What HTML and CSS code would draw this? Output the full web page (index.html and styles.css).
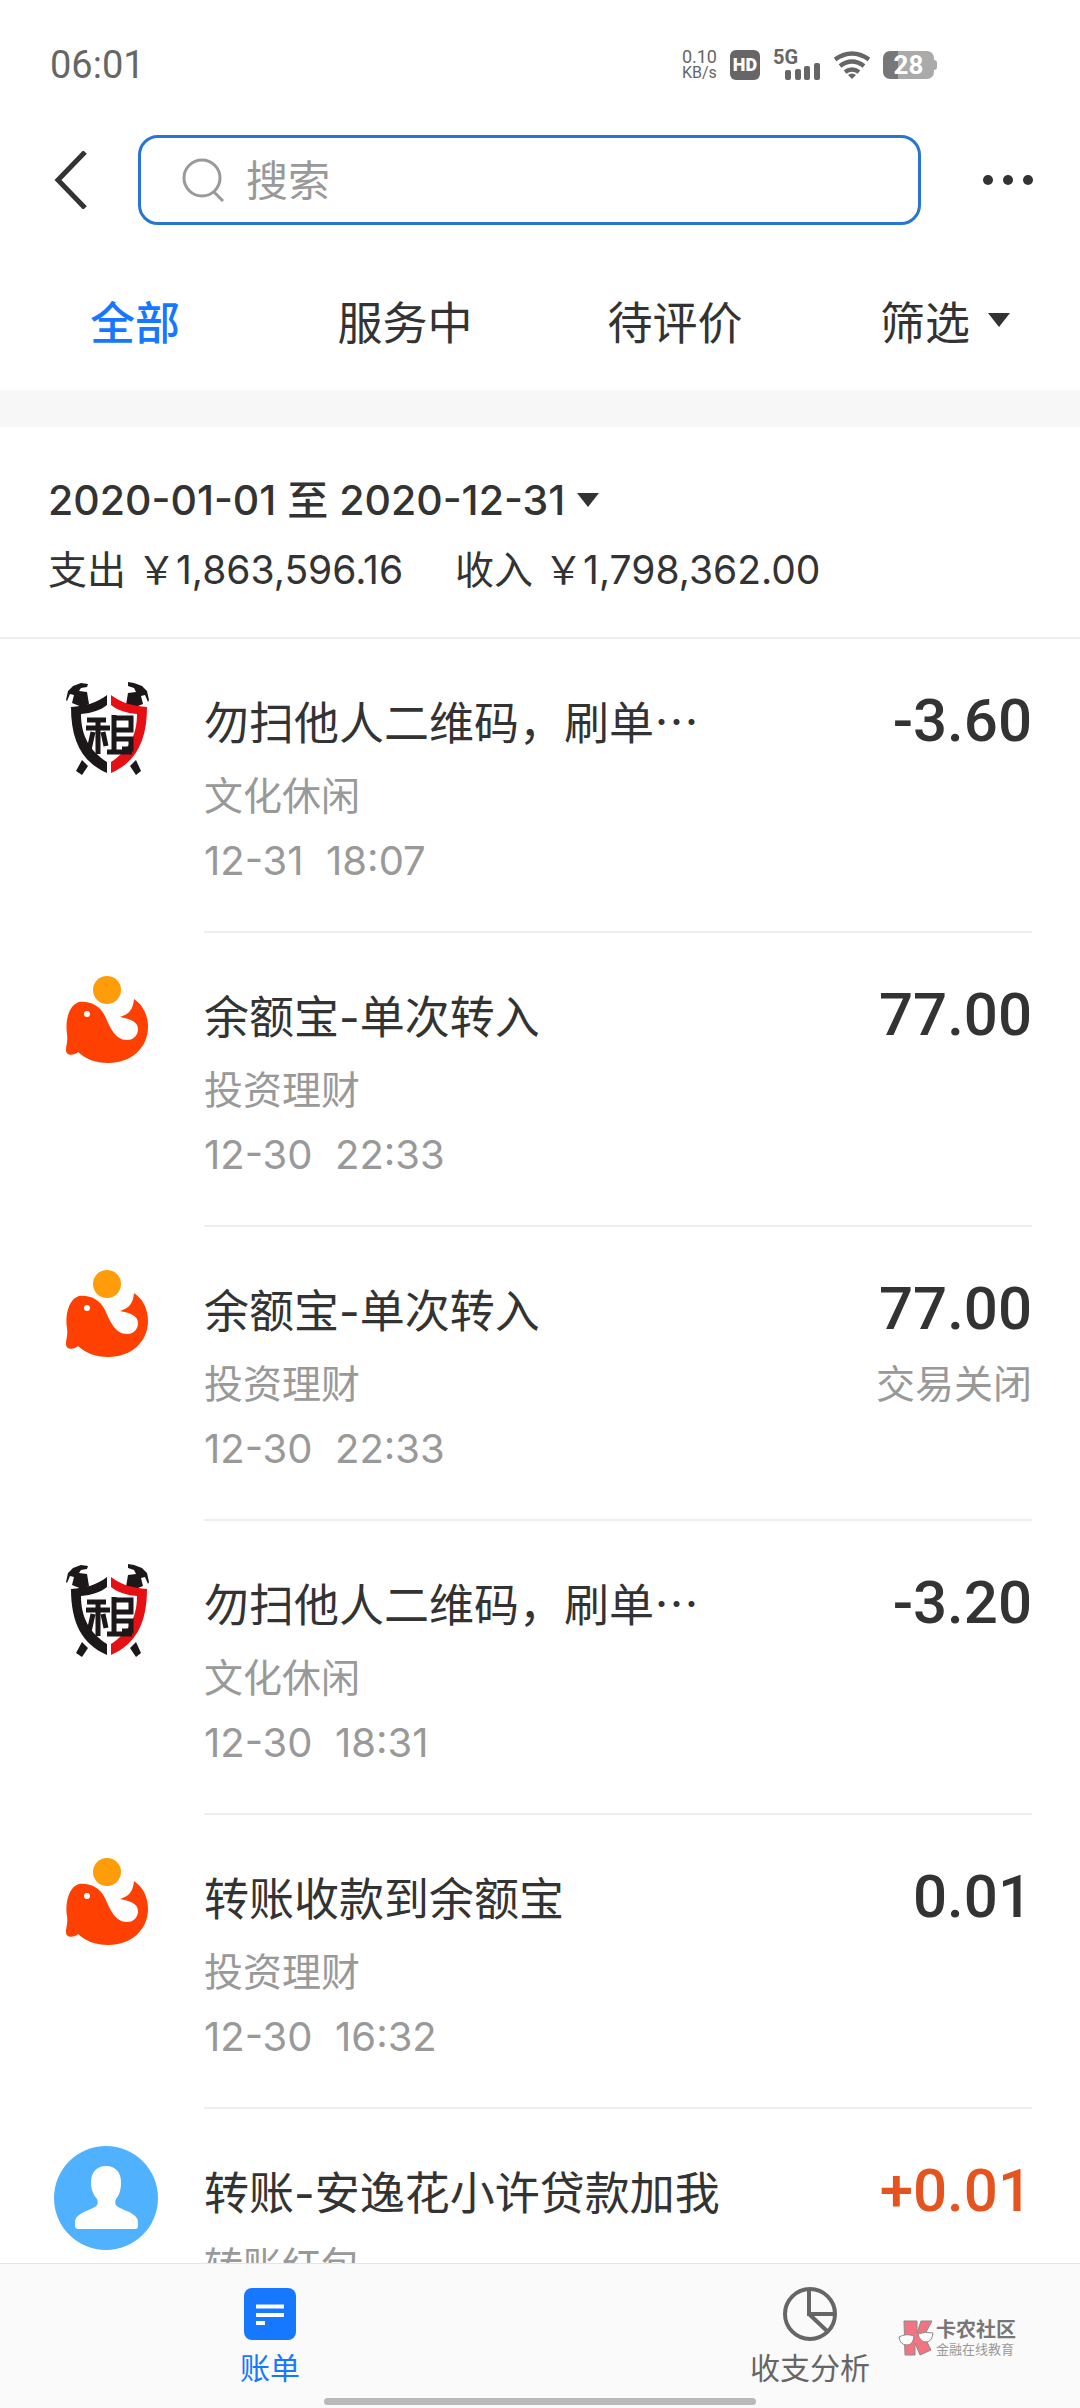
FILE: index.html
```html
<!DOCTYPE html>
<html lang="zh-CN">
<head>
  <meta charset="UTF-8" />
  <meta name="viewport" content="width=device-width, initial-scale=1" />
  <title>账单</title>
  <link rel="stylesheet" href="styles.css">
</head>
<body>

  <!-- shared list icons -->
  <svg class="sprite" aria-hidden="true">
    <symbol id="icon-shield" viewBox="0 0 104 104">
      <g fill="#1c1718">
        <path d="M12 24l2-9 5-5 8-3 7 1-1 3-6 1-2 3 8 1 2 12-7 3-10-4 2-8-4-1-3 7z"/>
        <path d="M95 24l-2-9-5-5-8-3-6-1v4l6 2 2 4-8 1-2 12 7 3 10-4-2-8 4-1 3 7z"/>
        <path d="M28 84l6 6-6 9-6-4zM82 84l-6 6 6 9 5-4z"/>
        <path d="M53 19v10c-6 5-15 8-26 9 0 22 9 37 26 48v11C28 86 17 65 17 31c14-1 26-4 36-12z"/>
      </g>
      <path fill="#e60f14" d="M57 19v10c6 5 15 8 26 9 0 22-9 37-26 48v11c25-11 36-32 36-66-14-1-26-4-36-12z"/>
      <g fill="none" stroke="#1c1718" stroke-width="5">
        <path d="M33 44h19M32 52h24M44 42v36M39 56l-4 18M49 56l3 14M60 39v38M60 42h17v12H60M60 63h17v10H68M53 76h25"/>
      </g>
    </symbol>
    <symbol id="icon-whale" viewBox="0 0 104 104">
      <circle cx="53" cy="20" r="14" fill="#ff9c0a"/>
      <path fill="#ff4003" d="M25 32c12-1 21 4 26 14 5 11 10 24 22 24 7 0 11-5 11-11 0-8-9-10-18-12 9-3 13-7 14-18 9 6 14 16 14 28 0 21-17 36-40 36-13 0-22-4-30-11-4 4-12 4-12-2 0-5 2-8 1-16-2-14 2-29 12-32z"/>
      <circle cx="33" cy="44" r="3" fill="#fff"/>
    </symbol>
    <symbol id="icon-user" viewBox="0 0 104 104">
      <circle cx="52" cy="52" r="52" fill="#50b1ff"/>
      <path fill="#fff" d="M52 20c10 0 15 7 15 16 0 9-2 13-5 17-2 5 0 7 4 9 9 4 18 7 18 14v4c0 2-1 3-3 3H24c-2 0-3-1-3-3v-4c0-7 9-10 18-14 4-2 6-4 4-9-3-4-6-8-6-17 0-9 5-16 15-16z"/>
    </symbol>
  </svg>

  <div class="app">
    <div class="status-bar">
      <span class="clock">06:01</span>
      <div class="status-icons">
        <div class="net-speed"><span>0.10</span><span class="unit">KB/s</span></div>
        <span class="hd">HD</span>
        <div class="signal">
          <span class="signal-type">5G</span>
          <svg width="36" height="18" viewBox="0 0 36 18" fill="#666"><rect x="0" y="8" width="6" height="10" rx="2"/><rect x="10" y="7" width="6" height="11" rx="2"/><rect x="19" y="4" width="6" height="14" rx="2"/><rect x="29" y="1" width="6" height="17" rx="2"/></svg>
        </div>
        <svg width="36" height="28" viewBox="0 0 36 28"><g fill="none" stroke="#666" stroke-width="4.500"><path d="M1 8.500q17-12 34 0"/><path d="M6 15q12-9 24 0"/><path d="M11 21q7-5 14 0"/></g><path fill="#666" d="M14 24q4-3 8 0l-4 4z"/></svg>
        <div class="battery"><span>28</span></div>
      </div>
    </div>

    <header class="top-bar">
      <button aria-label="返回">
        <svg width="34" height="58" viewBox="0 0 34 58" fill="none" stroke="#333" stroke-width="5"><path d="M31 1L4 29l27 28"/></svg>
      </button>
      <label class="search-box">
        <svg width="44" height="44" viewBox="0 0 44 44" fill="none" stroke="#999" stroke-width="3"><circle cx="20" cy="20" r="18"/><path d="M32 34l9 9"/></svg>
        <input type="search" placeholder="搜索" aria-label="搜索">
      </label>
      <button aria-label="更多">
        <svg width="50" height="10" viewBox="0 0 50 10" fill="#333"><circle cx="5" cy="5" r="5"/><circle cx="25" cy="5" r="5"/><circle cx="45" cy="5" r="5"/></svg>
      </button>
    </header>

    <div class="tabs">
      <button class="tab active">全部</button>
      <button class="tab">服务中</button>
      <button class="tab">待评价</button>
      <button class="tab">筛选<i class="caret"></i></button>
    </div>

    <section class="summary">
      <button class="date-range">2020-01-01 至 2020-12-31<i class="caret"></i></button>
      <div class="totals">
        <span>支出 ￥1,863,596.16</span>
        <span>收入 ￥1,798,362.00</span>
      </div>
    </section>

    <ul class="bill-list">
      <li class="bill">
        <svg class="bill-icon"><use href="#icon-shield"/></svg>
        <div class="bill-body">
          <div class="bill-info">
            <div class="bill-title">勿扫他人二维码，刷单<span class="dots">…</span></div>
            <div class="bill-type">文化休闲</div>
            <div class="bill-time">12-31&nbsp; 18:07</div>
          </div>
          <div class="bill-side"><div class="amount">-3.60</div></div>
        </div>
      </li>
      <li class="bill">
        <svg class="bill-icon"><use href="#icon-whale"/></svg>
        <div class="bill-body">
          <div class="bill-info">
            <div class="bill-title">余额宝-单次转入</div>
            <div class="bill-type">投资理财</div>
            <div class="bill-time">12-30&nbsp; 22:33</div>
          </div>
          <div class="bill-side"><div class="amount">77.00</div></div>
        </div>
      </li>
      <li class="bill">
        <svg class="bill-icon"><use href="#icon-whale"/></svg>
        <div class="bill-body">
          <div class="bill-info">
            <div class="bill-title">余额宝-单次转入</div>
            <div class="bill-type">投资理财</div>
            <div class="bill-time">12-30&nbsp; 22:33</div>
          </div>
          <div class="bill-side"><div class="amount">77.00</div><div class="bill-type">交易关闭</div></div>
        </div>
      </li>
      <li class="bill">
        <svg class="bill-icon"><use href="#icon-shield"/></svg>
        <div class="bill-body">
          <div class="bill-info">
            <div class="bill-title">勿扫他人二维码，刷单<span class="dots">…</span></div>
            <div class="bill-type">文化休闲</div>
            <div class="bill-time">12-30&nbsp; 18:31</div>
          </div>
          <div class="bill-side"><div class="amount">-3.20</div></div>
        </div>
      </li>
      <li class="bill">
        <svg class="bill-icon"><use href="#icon-whale"/></svg>
        <div class="bill-body">
          <div class="bill-info">
            <div class="bill-title">转账收款到余额宝</div>
            <div class="bill-type">投资理财</div>
            <div class="bill-time">12-30&nbsp; 16:32</div>
          </div>
          <div class="bill-side"><div class="amount">0.01</div></div>
        </div>
      </li>
      <li class="bill">
        <svg class="bill-icon"><use href="#icon-user"/></svg>
        <div class="bill-body">
          <div class="bill-info">
            <div class="bill-title">转账-安逸花小许贷款加我</div>
            <div class="bill-type">转账红包</div>
          </div>
          <div class="bill-side"><div class="amount income">+0.01</div></div>
        </div>
      </li>
    </ul>

    <nav class="bottom-nav">
      <a class="nav-item active" href="#">
        <svg width="54" height="54" viewBox="0 0 54 54"><rect x="1" y="1" width="52" height="52" rx="8" fill="#1677ff"/><path d="M13 19.500h28M13 28h28M13 36h9" stroke="#fff" stroke-width="4"/></svg>
        账单
      </a>
      <a class="nav-item" href="#">
        <svg width="54" height="54" viewBox="0 0 54 54" fill="none" stroke="#666" stroke-width="4"><circle cx="27" cy="27" r="25"/><path d="M26 2v25h26M26 27l18 17"/></svg>
        收支分析
      </a>
      <div class="home-indicator"></div>
      <div class="watermark">
        <svg width="36" height="36" viewBox="0 0 36 36" stroke="#8a8a8a"><path fill="#f27480" d="M6 1h13v12l4-12h11l-8 15 7 14-11 5-5-12v12H7z"/><path fill="#fff" d="M1 17q7-4 15-1-1 9-7 9-7 0-8-8zM20 14q7-3 15-1-1 9-7 9-6 0-8-8z"/></svg>
        <div>
          <div class="mark-name">卡农社区</div>
          <div class="mark-sub">金融在线教育</div>
        </div>
      </div>
    </nav>
  </div>

</body>
</html>
```

FILE: styles.css
```css
* { box-sizing: border-box; }
body {
  margin: 0;
  background: #fff;
  color: #333;
  font-family: Inter, "Noto Sans CJK SC", sans-serif;
}
button {
  padding: 0;
  border: none;
  background: none;
  color: inherit;
  font: inherit;
  cursor: pointer;
}
svg { display: block; flex: none; }
.sprite { position: absolute; width: 0; height: 0; }
.app {
  height: 100vh;
  display: flex;
  flex-direction: column;
}
.app > * { flex: none; }

/* status bar */
.status-bar {
  display: flex;
  justify-content: space-between;
  align-items: center;
  height: 130px;
  padding: 0 146px 0 50px;
  color: #666;
  font-family: Roboto, sans-serif;
}
.clock { font-size: 38px; }
.status-icons { display: flex; align-items: center; gap: 13px; }
.net-speed {
  display: flex;
  flex-direction: column;
  align-items: center;
  font-size: 18px;
  line-height: 16px;
}
.net-speed .unit { font-size: 16px; }
.hd {
  width: 30px;
  height: 30px;
  border-radius: 6px;
  background: #666;
  color: #fff;
  font-size: 18px;
  font-weight: 900;
  line-height: 30px;
  text-align: center;
}
.signal {
  display: flex;
  flex-direction: column;
  align-items: flex-end;
  width: 48px;
}
.signal-type {
  align-self: flex-start;
  height: 12px;
  font-size: 20px;
  font-weight: bold;
  line-height: 14px;
}
.battery {
  position: relative;
  width: 51px;
  height: 28px;
  border-radius: 7px;
  background: linear-gradient(to right, #777 15px, #aaa 15px);
  color: #fff;
  font-size: 26px;
  font-weight: bold;
  line-height: 28px;
  text-align: center;
}
.battery::after {
  content: "";
  position: absolute;
  right: -3px;
  top: 9px;
  width: 3px;
  height: 10px;
  border-radius: 0 3px 3px 0;
  background: #aaa;
}

/* search */
.top-bar {
  display: flex;
  align-items: center;
  height: 100px;
  padding: 0 47px 0 54px;
}
.search-box {
  flex: 1;
  display: flex;
  align-items: center;
  gap: 20px;
  min-width: 0;
  height: 90px;
  margin: 0 62px 0 50px;
  padding: 0 41px;
  border: 3px solid #2875d2;
  border-radius: 20px;
}
.search-box input {
  flex: 1;
  min-width: 0;
  padding: 0;
  border: none;
  outline: none;
  background: none;
  color: #333;
  font: inherit;
  font-size: 42px;
}
.search-box input::placeholder { color: #999; opacity: 1; }

/* tabs */
.tabs {
  display: flex;
  height: 160px;
  padding-top: 20px;
}
.tab {
  flex: 1;
  display: flex;
  align-items: center;
  justify-content: center;
  gap: 18px;
  font-size: 45px;
}
.tab.active { color: #1677ff; font-weight: 500; }
.caret {
  border: 11px solid transparent;
  border-top: 14px solid #333;
  border-bottom: 0;
}

/* date and totals */
.summary {
  padding: 42px 48px 0;
  height: 249px;
  border-top: 37px solid #f7f7f7;
  border-bottom: 2px solid #eee;
}
.date-range {
  display: flex;
  align-items: center;
  gap: 12px;
  font-size: 41px;
  font-weight: 500;
  line-height: 62px;
}
.totals {
  display: flex;
  gap: 52px;
  margin-top: 8px;
  font-size: 39px;
  line-height: 62px;
}

/* bills */
.app > .bill-list {
  flex: 1;
  min-height: 0;
  margin: 0;
  padding: 0;
  overflow: hidden;
  list-style: none;
}
.bill {
  display: flex;
  gap: 46px;
  height: 294px;
  padding: 0 48px 0 54px;
}
.bill-icon { width: 104px; height: 104px; margin-top: 37px; }
.bill-body {
  flex: 1;
  display: flex;
  justify-content: space-between;
  padding-top: 49px;
  border-bottom: 2px solid #eee;
}
.bill-title { font-size: 45px; line-height: 72px; }
/* centred ellipsis */
.dots { font-family: "Noto Sans CJK SC", sans-serif; line-height: 1; }
.bill-type { color: #999; font-size: 39px; line-height: 72px; }
.bill-time { color: #999; font-size: 40px; line-height: 58px; }
.bill-side { text-align: right; }
.amount {
  margin-bottom: 6px;
  font-family: Roboto, sans-serif;
  font-size: 60px;
  font-weight: 500;
  line-height: 66px;
}
.amount.income { color: #e5541f; }

/* bottom nav */
.bottom-nav {
  position: relative;
  display: flex;
  height: 145px;
  border-top: 1px solid #e5e5e5;
  background: #fafafa;
}
.nav-item {
  flex: 1;
  display: flex;
  flex-direction: column;
  align-items: center;
  gap: 6px;
  padding-top: 23px;
  color: #666;
  font-size: 30px;
  line-height: 42px;
  text-decoration: none;
}
.nav-item.active { color: #1677ff; }
.home-indicator {
  position: absolute;
  bottom: 3px;
  left: 30%;
  right: 30%;
  height: 7px;
  border-radius: 4px;
  background: #bababa;
}
.watermark {
  position: absolute;
  right: 64px;
  bottom: 51px;
  display: flex;
  align-items: center;
  gap: 2px;
}
.mark-name { color: #777; font-size: 20px; font-weight: bold; line-height: 22px; }
.mark-sub { color: #999; font-size: 13px; line-height: 16px; }
```
